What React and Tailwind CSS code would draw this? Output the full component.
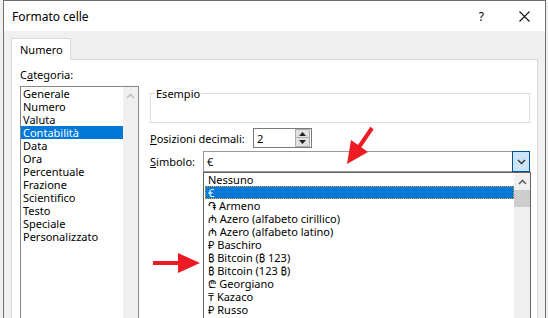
import React from "react";

const FONT = { fontFamily: '"Noto Sans", "DejaVu Sans", sans-serif' };

const CATEGORIES = ["Generale", "Numero", "Valuta", "Contabilità", "Data", "Ora", "Percentuale", "Frazione", "Scientifico", "Testo", "Speciale", "Personalizzato"];

const SYMBOLS = [
  ["", "Nessuno"],
  ["€", ""],
  ["֏", "Armeno"],
  ["₼", "Azero (alfabeto cirillico)"],
  ["₼", "Azero (alfabeto latino)"],
  ["₽", "Baschiro"],
  ["₿", "Bitcoin (₿ 123)"],
  ["₿", "Bitcoin (123 ₿)"],
  ["₾", "Georgiano"],
  ["₸", "Kazaco"],
  ["₽", "Russo"],
];

function UpChevron({ color = "#c2c2c2" }) {
  return (
    <svg width="9" height="6" viewBox="0 0 9 6">
      <path d="M1 5 L4.5 1.5 L8 5" fill="none" stroke={color} strokeWidth="1.6" />
    </svg>
  );
}

export default function App() {
  return (
    <div className="w-[548px] h-[318px] bg-[#f0f0f0] overflow-hidden relative text-[11px] text-black" style={FONT}>
      <div className="ml-[3px] w-[543px] h-[330px] border-x border-t border-[#6e6e6e] flex flex-col">
        {/* Title bar */}
        <div className="h-[30px] bg-white flex items-center pl-[8px] shrink-0">
          <span className="text-[12px] leading-[13px]">Formato celle</span>
          <span className="ml-auto text-[12px] leading-[13px] mr-[35px]">?</span>
          <svg className="mr-[15px]" width="11" height="11" viewBox="0 0 11 11">
            <path d="M0.5 0.5 L10.5 10.5 M10.5 0.5 L0.5 10.5" stroke="#111" strokeWidth="1.1" />
          </svg>
        </div>

        {/* Body */}
        <div className="flex-1 bg-[#f0f0f0] pl-[7px] pt-[7px]">
          <div className="relative z-10 -mb-px w-[60px] h-[22px] bg-white border border-b-0 border-[#d9d9d9] flex items-center pl-[8px] leading-[13px]">
            Numero
          </div>
          <div className="w-[527px] h-[270px] bg-white border border-[#d9d9d9] pl-[8px] pt-[8px] flex gap-[11px]">
            {/* Left column */}
            <div className="w-[119px] shrink-0">
              <div className="leading-[13px]">C<span className="underline">a</span>tegoria:</div>
              <div className="mt-[5px] h-[240px] border border-[#828790] flex">
                <div className="flex-1">
                  {CATEGORIES.map((c) => (
                    <div key={c} className={"h-[13px] leading-[13px] pl-[2px] whitespace-nowrap " + (c === "Contabilità" ? "bg-[#0078d7] text-white" : "")}>
                      {c}
                    </div>
                  ))}
                </div>
                <div className="w-[15px] bg-[#f0f0f0] flex justify-center pt-[6px]">
                  <div className="h-[6px]"><UpChevron /></div>
                </div>
              </div>
            </div>

            {/* Right column */}
            <div className="w-[380px] shrink-0">
              <fieldset className="mt-[19px] border border-[#dcdcdc] w-[380px]">
                <legend className="ml-[4px] px-px leading-[13px]">Esempio</legend>
                <div className="h-[22px]" />
              </fieldset>

              <div className="mt-[5px] flex items-center h-[20px]">
                <div className="w-[103px] leading-[13px] whitespace-nowrap"><span className="underline">P</span>osizioni decimali:</div>
                <div className="w-[59px] h-[20px] border border-[#7a7a7a] flex items-center">
                  <span className="flex-1 pl-[3px] leading-[13px]">2</span>
                  <div className="w-[15px] h-[18px] flex flex-col mr-px">
                    <div className="h-[9px] bg-[#e1e1e1] border border-[#adadad] flex items-center justify-center">
                      <svg width="7" height="4" viewBox="0 0 7 4"><path d="M0 4 L3.5 0 L7 4 Z" fill="#222" /></svg>
                    </div>
                    <div className="h-[9px] bg-[#e1e1e1] border border-t-0 border-[#adadad] flex items-center justify-center">
                      <svg width="7" height="4" viewBox="0 0 7 4"><path d="M0 0 L3.5 4 L7 0 Z" fill="#222" /></svg>
                    </div>
                  </div>
                </div>
              </div>

              <div className="mt-[3px] flex items-center h-[21px]">
                <div className="w-[53px] leading-[13px]"><span className="underline">S</span>imbolo:</div>
                <div className="relative w-[327px] h-[21px] border border-[#9a9a9a] flex items-center">
                  <span className="flex-1 pl-[3px] leading-[13px]">€</span>
                  <div className="w-[18px] h-[21px] -mr-px bg-[#cce4f7] border border-[#005499] flex items-center justify-center">
                    <svg width="9" height="6" viewBox="0 0 9 6">
                      <path d="M1 1 L4.5 4.5 L8 1" fill="none" stroke="#333" strokeWidth="1.3" />
                    </svg>
                  </div>

                  {/* Open dropdown list */}
                  <div className="absolute left-[-1px] top-[20px] w-[328px] h-[160px] bg-white border border-[#646464] flex">
                    <div className="flex-1 pl-px">
                      {SYMBOLS.map(([sym, name], i) => (
                        <div
                          key={i}
                          className={
                            "h-[13px] leading-[13px] pl-[3px] whitespace-nowrap " +
                            (i === 1 ? "bg-[#0078d7] text-white outline outline-1 outline-dotted outline-[#e8a33c] -outline-offset-1" : "")
                          }
                        >
                          {sym}
                          {sym && name ? " " : ""}
                          {name}
                        </div>
                      ))}
                    </div>
                    <div className="w-[16px] bg-[#f0f0f0] flex flex-col items-center">
                      <div className="h-[17px] flex items-center"><UpChevron color="#606060" /></div>
                      <div className="w-full h-[17px] bg-[#cdcdcd]" />
                    </div>
                  </div>
                </div>
              </div>
            </div>
          </div>
        </div>
      </div>

      {/* Red annotation arrows */}
      <svg className="absolute left-0 top-0 pointer-events-none" width="548" height="318">
        <line x1="372" y1="128" x2="359" y2="147" stroke="#ed1c24" strokeWidth="4" />
        <polygon points="347,164 351,140 368,152" fill="#ed1c24" />
        <rect x="153" y="261" width="27" height="4" fill="#ed1c24" />
        <polygon points="178,253 178,273 200,263" fill="#ed1c24" />
      </svg>
    </div>
  );
}
